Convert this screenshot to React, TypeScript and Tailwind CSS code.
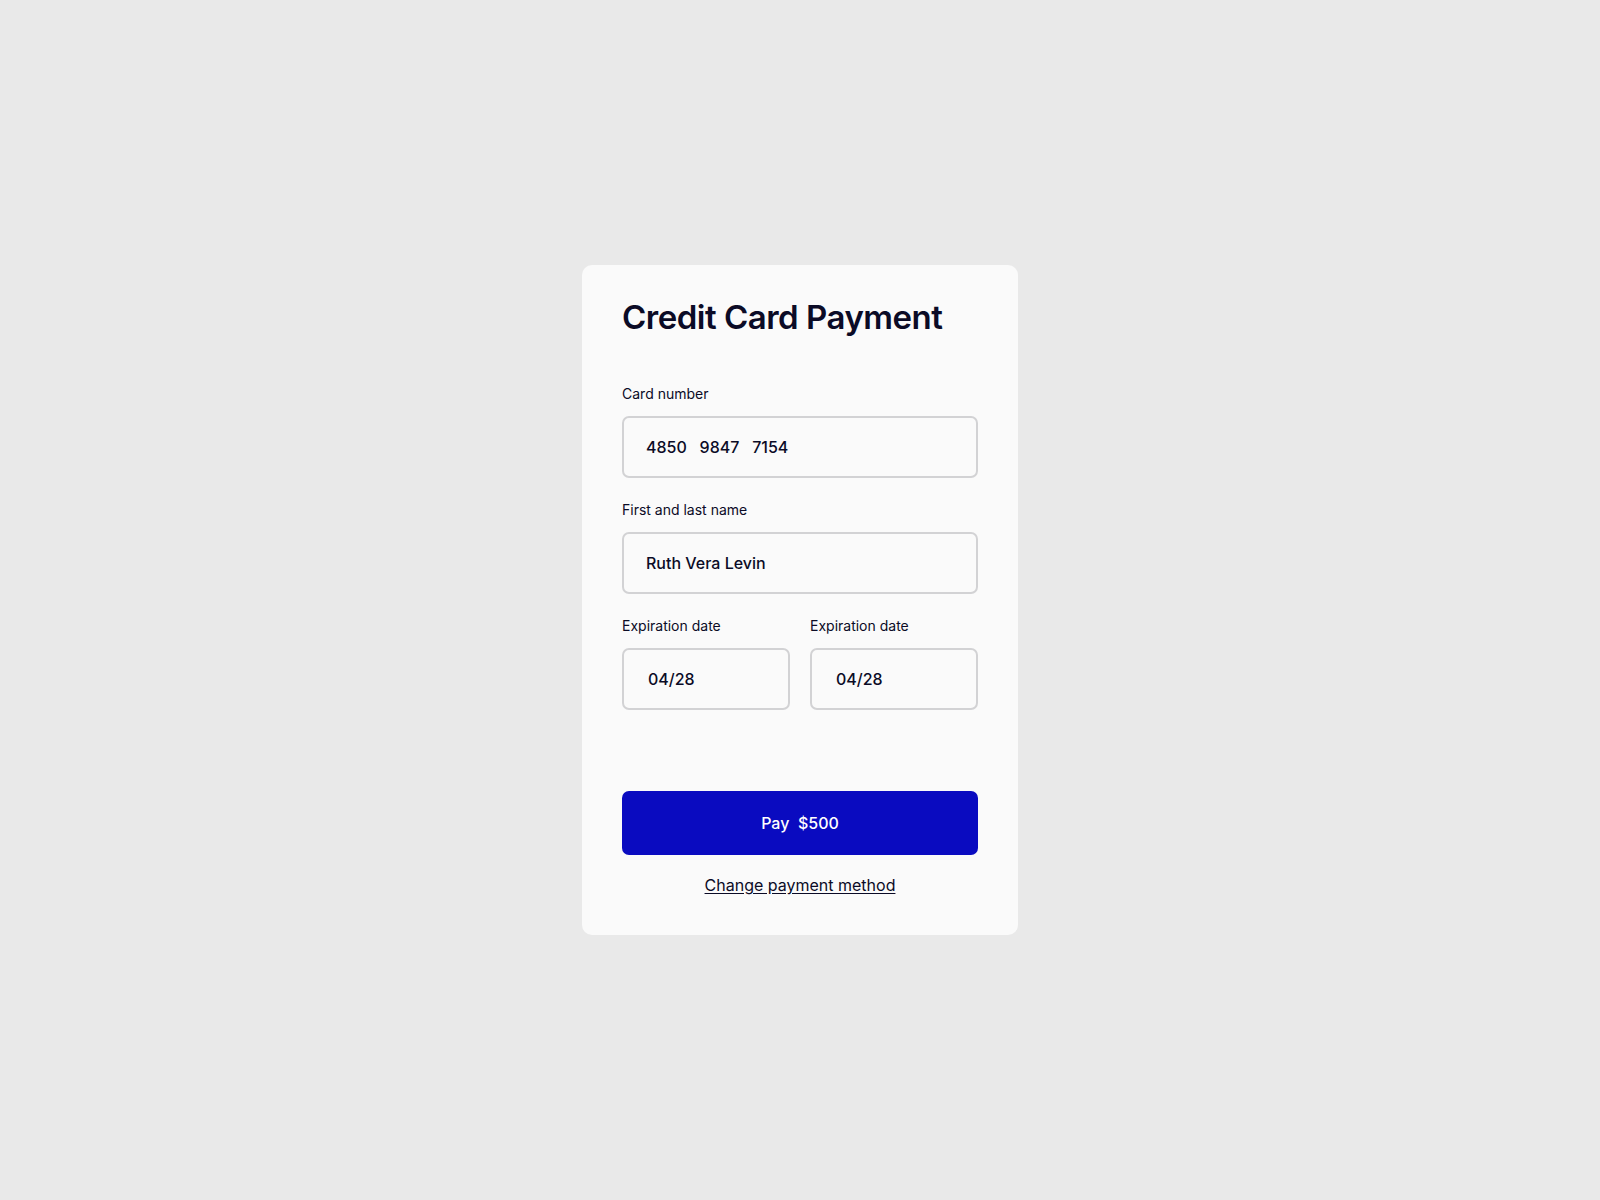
const Field = ({ label, value, wide = false }: { label: string; value: string; wide?: boolean }) => (
  <div className="flex flex-col">
    <label className="text-[14px] leading-5 text-[#0b0b26] mb-3">{label}</label>
    <input
      readOnly
      value={value}
      className={
        "h-[62px] w-full rounded-[7px] border-2 border-[#d2d2d4] bg-[#fafafa] text-[16px] font-medium text-[#0b0b26] outline-none whitespace-pre " +
        (wide ? "px-6" : "px-[22px]")
      }
      style={{ fontFamily: "Inter, 'Noto Sans', sans-serif" }}
    />
  </div>
);

const App = () => {
  return (
    <div
      className="min-h-screen w-full bg-[#e9e9e9] flex items-center justify-center"
      style={{ fontFamily: "Inter, 'Noto Sans', sans-serif" }}
    >
      <div className="w-[436px] rounded-[10px] bg-[#fafafa] px-10 pt-8 pb-[37px]">
        <h1 className="text-[33px] leading-[40px] font-semibold tracking-[-0.015em] text-[#0b0b26]">
          Credit Card Payment
        </h1>

        <form className="mt-[47px] flex flex-col gap-[22px]">
          <Field label="Card number" value="4850   9847   7154" />
          <Field label="First and last name" value="Ruth Vera Levin" />
          <div className="grid grid-cols-2 gap-5">
            <Field label="Expiration date" value="04/28" wide />
            <Field label="Expiration date" value="04/28" wide />
          </div>
        </form>

        <button
          type="button"
          className="mt-[81px] h-16 w-full rounded-[7px] bg-[#0a0bc0] text-[16px] font-medium text-white whitespace-pre"
        >
          Pay  $500
        </button>

        <div className="mt-[18px] mb-px text-center">
          <a href="#" className="text-[16px] leading-6 text-[#0b0b26] underline underline-offset-2">
            Change payment method
          </a>
        </div>
      </div>
    </div>
  );
};

export default App;
